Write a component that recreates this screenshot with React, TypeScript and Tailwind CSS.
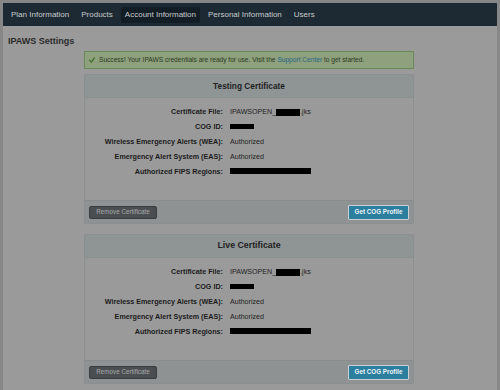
import React from 'react';

const NAV = ['Plan Information', 'Products', 'Account Information', 'Personal Information', 'Users'];

const Redact: React.FC<{ w: number; h?: number }> = ({ w, h = 6 }) => (
    <span className="inline-block bg-black" style={{ width: w, height: h }} />
);

interface Row {
    label: string;
    value: React.ReactNode;
}

const rows: Row[] = [
    {
        label: 'Certificate File:',
        value: (
            <span className="flex items-center">
                IPAWSOPEN_<Redact w={24} h={7} />.jks
            </span>
        ),
    },
    { label: 'COG ID:', value: <Redact w={24} h={5} /> },
    { label: 'Wireless Emergency Alerts (WEA):', value: 'Authorized' },
    { label: 'Emergency Alert System (EAS):', value: 'Authorized' },
    { label: 'Authorized FIPS Regions:', value: <Redact w={81} /> },
];

const CertCard: React.FC<{ title: string; big?: boolean }> = ({ title, big }) => (
    <div className="border border-[#8b8f8f] bg-[#9a9a9a]">
        <div className={`h-[23px] flex items-center justify-center bg-[#8f9595] border-b border-[#899090] font-bold text-[#1e1e1e] ${big ? 'text-[8.8px]' : 'text-[8.3px]'}`}>
            {title}
        </div>
        <div className="pt-[7px] pb-[20px] flex flex-col">
            {rows.map(r => (
                <div key={r.label} className="flex h-[15px] items-center">
                    <div className="w-[145px] text-right font-bold text-[7.2px] text-[#1a1a1a] pr-[7px]">{r.label}</div>
                    <div className="text-[7.1px] text-[#222222]">{r.value}</div>
                </div>
            ))}
        </div>
        <div className="h-[23px] bg-[#8e9292] border-t border-[#888c8c] flex items-center justify-between px-[4px]">
            <button className="h-[13px] w-[68px] rounded-[2px] bg-[#4b4e51] border border-[#3a3c3e] text-[6.3px] text-[#a9abad] leading-none">
                Remove Certificate
            </button>
            <button className="h-[15px] w-[61px] rounded-[1px] bg-[#2b7e9e] border border-[#c8d2d6] text-[6.3px] font-bold text-[#eef4f6] leading-none">
                Get COG Profile
            </button>
        </div>
    </div>
);

const App: React.FC = () => {
    return (
        <div className="w-[500px] h-[390px] bg-[#878787] px-[3px] pt-[3px] overflow-hidden" style={{ fontFamily: '"Liberation Sans", Arial, sans-serif' }}>
            <div className="h-full bg-[#9a9a9a] flex flex-col">
                <div className="h-[23px] shrink-0 bg-[#1e2a33] flex items-center px-[4px] gap-[4px] text-[8px] text-[#c6cacd]">
                    {NAV.map(n => (
                        <div key={n} className={`px-[4px] h-[16px] flex items-center rounded-[2px] ${n === 'Account Information' ? 'bg-[#131d25]' : ''}`}>
                            {n}
                        </div>
                    ))}
                </div>
                <div className="px-[5px] pt-[11px] text-[9px] font-bold text-[#2a2a2a] leading-none">IPAWS Settings</div>
                <div className="w-[330px] ml-[81px] mt-[5px] flex flex-col">
                    <div className="h-[18px] border border-[#6b8a5a] bg-[#8ea07d] flex items-center px-[4px] text-[6.6px] text-[#2a3a22] whitespace-nowrap">
                        <svg viewBox="0 0 10 10" className="w-[6px] h-[6px] mr-[4px]">
                            <path d="M1 5.5 L4 8.5 L9 1.5" fill="none" stroke="#3f6f2c" strokeWidth="2.2" strokeLinecap="round" strokeLinejoin="round" />
                        </svg>
                        Success! Your IPAWS credentials are ready for use. Visit the&nbsp;
                        <span className="text-[#256886]">Support Center</span>&nbsp;to get started.
                    </div>
                    <div className="mt-[5px]">
                        <CertCard title="Testing Certificate" />
                    </div>
                    <div className="mt-[10px]">
                        <CertCard title="Live Certificate" big />
                    </div>
                </div>
            </div>
        </div>
    );
};

export default App;
